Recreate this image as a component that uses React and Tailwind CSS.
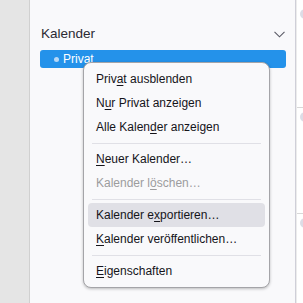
const font = { fontFamily: '"Liberation Sans", Arial, sans-serif' };

function Key({ children }) {
  return <span className="underline underline-offset-[2px]">{children}</span>;
}

function Item({ children, disabled, active }) {
  return (
    <div
      className={`h-6 flex items-center pl-2 mx-1 rounded-[4px] text-[12px] ${
        disabled ? "text-[#9c9c9e]" : "text-[#15141a]"
      } ${active ? "bg-[#e0e0e6]" : ""}`}
    >
      <span>{children}</span>
    </div>
  );
}

function Sep() {
  return (
    <div className="h-2 flex items-center px-2">
      <div className="h-px w-full bg-[#e0e0e6]" />
    </div>
  );
}

export default function App() {
  return (
    <div className="w-[303px] h-[303px] flex overflow-hidden bg-[#f9f9fb]" style={font}>
      <div className="w-[30px] shrink-0 bg-[#e5e5e5] border-r border-[#d0d0d0]" />
      <div className="relative w-[265px] shrink-0 bg-[#f9f9fb] pt-[24px]">
        <div className="flex items-center justify-between pl-[11px] pr-[10px] h-[20px]">
          <span className="text-[13.5px] text-[#2b2a33]">Kalender</span>
          <svg width="11" height="7" viewBox="0 0 11 7" className="text-[#5b5b66]">
            <path d="M0.5 0.8 L5.5 5.8 L10.5 0.8" fill="none" stroke="currentColor" strokeWidth="1.1" />
          </svg>
        </div>
        <div className="mt-[6px] ml-[10px] mr-[9px] h-[18px] rounded-[3px] bg-[#2492ea] flex items-center pl-[14px] gap-[4px]">
          <span className="w-[5px] h-[5px] rounded-full bg-[#b6d8f7]" />
          <span className="text-[12px] text-white">Privat</span>
        </div>

        <div className="absolute left-[53px] top-[62px] w-[187px] rounded-[8px] border border-[#a4a4a8] bg-[#f9f9fb] py-1 shadow-[0_1px_3px_rgba(0,0,0,0.25)]">
          <Item>Priv<Key>a</Key>t ausblenden</Item>
          <Item>N<Key>u</Key>r Privat anzeigen</Item>
          <Item>Alle Kalen<Key>d</Key>er anzeigen</Item>
          <Sep />
          <Item><Key>N</Key>euer Kalender…</Item>
          <Item disabled>Kalender l<Key>ö</Key>schen…</Item>
          <Sep />
          <Item active>Kalender e<Key>x</Key>portieren…</Item>
          <Item><Key>K</Key>alender veröffentlichen…</Item>
          <Sep />
          <Item><Key>E</Key>igenschaften</Item>
        </div>
      </div>
      <div className="flex-1 flex border-l border-[#cfcfd8]">
        <div className="w-px bg-[#ececec]" />
        <div className="flex-1 bg-white flex flex-col">
          <div className="h-[108px] border-b border-[#d8d8d8] pt-[9px]">
            <div className="w-[10px] h-[10px] rounded-full bg-[#dcdce6] ml-[3px]" />
          </div>
          <div className="h-[106px] border-b border-[#d8d8d8] pt-[4px]">
            <div className="w-[10px] h-[10px] rounded-full bg-[#dcdce6] ml-[3px]" />
          </div>
          <div className="flex-1 pt-[4px]">
            <div className="w-[10px] h-[10px] rounded-full bg-[#dcdce6] ml-[3px]" />
          </div>
        </div>
      </div>
    </div>
  );
}
